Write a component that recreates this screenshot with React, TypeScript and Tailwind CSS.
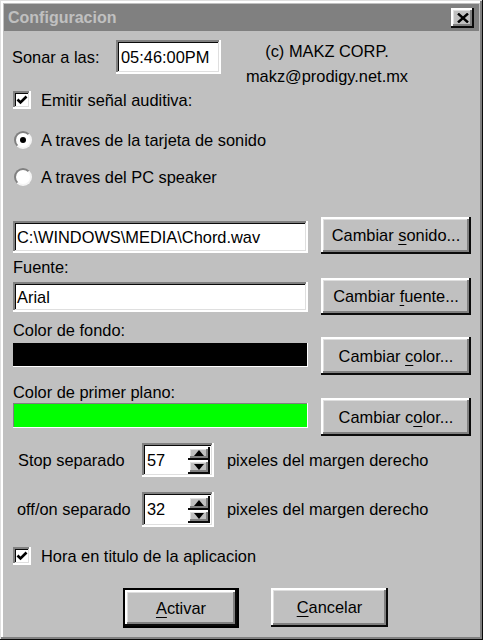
import type { ReactNode } from "react";

const raised =
  "bg-[#c0c0c0] shadow-[inset_-2px_-2px_#0a0a0a,inset_2px_2px_#ffffff,inset_-4px_-4px_#808080,inset_3px_3px_#dfdfdf]";
const sunken =
  "shadow-[inset_-2px_-2px_#ffffff,inset_2px_2px_#808080,inset_-3px_-3px_#dfdfdf,inset_3px_3px_#0a0a0a]";

function U({ children }: { children: ReactNode }) {
  return <span className="underline underline-offset-[3px] decoration-1">{children}</span>;
}

function Button({ children, className = "" }: { children: ReactNode; className?: string }) {
  return (
    <button type="button" className={`${raised} flex items-center justify-center text-[16.4px] ${className}`}>
      <span>{children}</span>
    </button>
  );
}

function Check() {
  return (
    <div className={`w-[18px] h-[18px] bg-white ${sunken} flex items-center justify-center shrink-0`}>
      <svg width="12" height="12" viewBox="0 0 12 12">
        <path d="M1.5 5.5 L4.5 8.5 L10.5 2.5" fill="none" stroke="#000" strokeWidth="2.6" />
      </svg>
    </div>
  );
}

function Radio({ on }: { on?: boolean }) {
  return (
    <div className="w-[18px] h-[18px] rounded-full bg-white border-2 border-t-[#808080] border-l-[#808080] border-b-[#f4f4f4] border-r-[#f4f4f4] flex items-center justify-center shrink-0">
      {on ? <div className="w-[6px] h-[6px] rounded-full bg-black" /> : null}
    </div>
  );
}

function Spinner({ value }: { value: string }) {
  return (
    <div className={`w-[72px] h-full bg-white ${sunken} flex items-center justify-between pl-[5px] pr-[4px]`}>
      <span>{value}</span>
      <div className="flex flex-col w-[22px] h-[27px]">
        <div className={`${raised} flex-1 flex items-center justify-center`}>
          <svg width="10" height="6" viewBox="0 0 10 6">
            <path d="M5 0 L10 6 L0 6 Z" fill="#000" />
          </svg>
        </div>
        <div className={`${raised} flex-1 flex items-center justify-center`}>
          <svg width="10" height="6" viewBox="0 0 10 6">
            <path d="M0 0 L10 0 L5 6 Z" fill="#000" />
          </svg>
        </div>
      </div>
    </div>
  );
}

export default function App() {
  return (
    <div className="w-[483px] h-[640px] bg-[#c0c0c0] p-[4px] font-['Liberation_Sans',Arial,sans-serif] text-[16.4px] text-black leading-none shadow-[inset_-1px_-1px_#0a0a0a,inset_1px_1px_#dfdfdf,inset_-3px_-3px_#808080,inset_3px_3px_#ffffff]">
      {/* barra de titulo */}
      <div className="h-[27px] bg-[#808080] flex items-center justify-between pl-[4px] pr-[5px]">
        <span className="font-bold text-[16px] text-[#c0c0c0]">Configuracion</span>
        <button type="button" className={`${raised} w-[23px] h-[20px] flex items-center justify-center`}>
          <svg width="12" height="10" viewBox="0 0 12 10">
            <path d="M1 0.5 L11 9.5 M11 0.5 L1 9.5" stroke="#000" strokeWidth="2.4" />
          </svg>
        </button>
      </div>

      <div className="pl-[9px]">
        <div className="mt-[7px] h-[48px] flex">
          <div className="mt-[2px] h-[34px] w-[104px] flex items-center -ml-[1px]">Sonar a las:</div>
          <div className={`mt-[2px] h-[34px] w-[105px] bg-white ${sunken} flex items-center pl-[5px]`}>05:46:00PM</div>
          <div className="w-[212px] flex flex-col items-center leading-[25px] pt-[1px]">
            <span>(c) MAKZ CORP.</span>
            <span>makz@prodigy.net.mx</span>
          </div>
        </div>

        <div className="mt-[4px] h-[20px] flex items-center gap-[10px]">
          <Check />
          <span>Emitir señal auditiva:</span>
        </div>
        <div className="mt-[20px] h-[20px] flex items-center gap-[9px] pl-[1px]">
          <Radio on />
          <span>A traves de la tarjeta de sonido</span>
        </div>
        <div className="mt-[17px] h-[20px] flex items-center gap-[9px] pl-[1px]">
          <Radio />
          <span>A traves del PC speaker</span>
        </div>

        <div className="mt-[30px] flex gap-[13px]">
          <div className={`mt-[4px] w-[295px] h-[32px] bg-white ${sunken} flex items-center pl-[4px]`}>
            C:\WINDOWS\MEDIA\Chord.wav
          </div>
          <Button className="w-[150px] h-[37px]">
            Cambiar <U>s</U>onido...
          </Button>
        </div>

        <div className="mt-[4px] flex gap-[13px]">
          <div className="w-[295px] flex flex-col">
            <span className="h-[18px] leading-[18px]">Fuente:</span>
            <div className={`mt-[6px] h-[30px] bg-white ${sunken} flex items-center pl-[4px]`}>Arial</div>
          </div>
          <Button className="mt-[20px] w-[150px] h-[37px]">
            Cambiar <U>f</U>uente...
          </Button>
        </div>

        <div className="mt-[6px] flex gap-[13px]">
          <div className="w-[295px] flex flex-col">
            <span className="h-[18px] leading-[18px]">Color de fondo:</span>
            <div className="mt-[4px] h-[24px] bg-black shadow-[inset_-1px_-1px_#ffffff]" />
          </div>
          <Button className="mt-[16px] w-[150px] h-[38px]">
            Cambiar <U>c</U>olor...
          </Button>
        </div>

        <div className="mt-[8px] flex gap-[13px]">
          <div className="w-[295px] flex flex-col">
            <span className="h-[18px] leading-[18px]">Color de primer plano:</span>
            <div className="mt-[2px] h-[25px] bg-[#00ff00] shadow-[inset_-1px_-1px_#ffffff,inset_1px_1px_#808080]" />
          </div>
          <Button className="mt-[15px] w-[150px] h-[38px]">
            Cambiar c<U>o</U>lor...
          </Button>
        </div>

        <div className="mt-[7px] h-[34px] flex items-center">
          <span className="w-[129px] pl-[5px]">Stop separado</span>
          <Spinner value="57" />
          <span className="ml-[13px]">pixeles del margen derecho</span>
        </div>
        <div className="mt-[15px] h-[35px] flex items-center">
          <span className="w-[129px] pl-[4px]">off/on separado</span>
          <Spinner value="32" />
          <span className="ml-[13px]">pixeles del margen derecho</span>
        </div>

        <div className="mt-[19px] h-[20px] flex items-center gap-[10px]">
          <Check />
          <span>Hora en titulo de la aplicacion</span>
        </div>

        <div className="mt-[22px] flex gap-[32px] ml-[110px]">
          <div className="w-[116px] h-[40px] border-2 border-black">
            <Button className="w-full h-full">
              <U>A</U>ctivar
            </Button>
          </div>
          <Button className="w-[117px] h-[39px]">
            <U>C</U>ancelar
          </Button>
        </div>
      </div>
    </div>
  );
}
